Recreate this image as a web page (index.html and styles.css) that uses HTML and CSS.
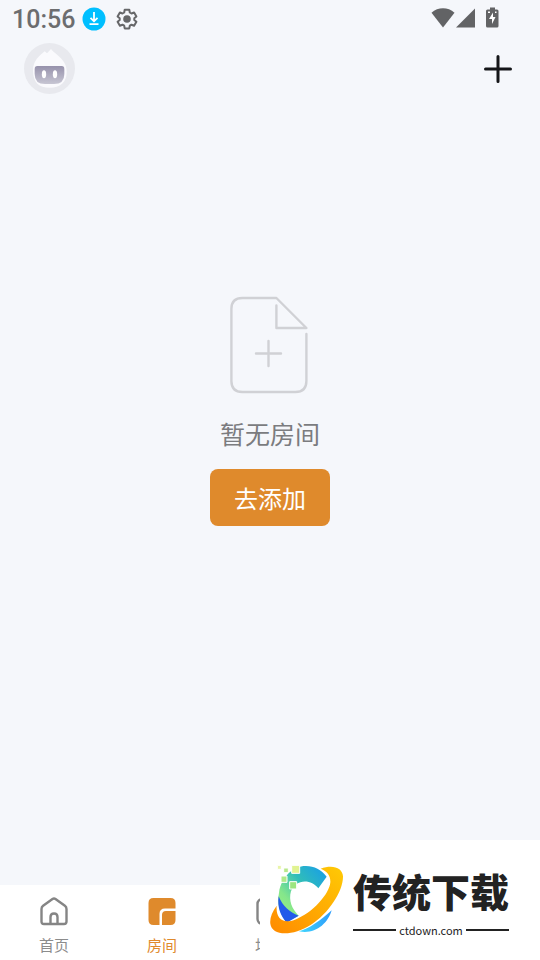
FILE: index.html
```html
<!DOCTYPE html>
<html lang="zh-CN">
<head>
<meta charset="utf-8">
<meta name="viewport" content="width=device-width, initial-scale=1">
<title>房间</title>
<link rel="stylesheet" href="styles.css">
</head>
<body>
<div class="app">
  <div class="status">
    <span class="clock">10:56</span>
    <svg class="status-download" width="24" height="24" viewBox="0 0 24 24">
      <circle cx="12" cy="12" r="11.5" fill="#00bfff"/>
      <path d="M12 5v9M8.5 10.8 12 14.3l3.5-3.5M7.5 17.2h9" fill="none" stroke="#fff" stroke-width="1.8"/>
    </svg>
    <svg class="status-gear" width="24" height="24" viewBox="0 0 24 24" fill="none" stroke="#666769" stroke-width="2" stroke-linejoin="round">
      <path d="M9.7 2.8h4.6l.5 2.7 1.7 1 2.6-1 2.3 4-2.1 1.7v1.8l2.1 1.7-2.3 4-2.6-1-1.7 1-.5 2.7H9.7l-.5-2.7-1.7-1-2.6 1-2.3-4L4.7 13v-1.8L2.6 9.5l2.3-4 2.6 1 1.7-1z"/>
      <circle cx="12" cy="12" r="3.8" fill="#666769" stroke="none"/>
    </svg>
    <div class="system">
      <svg width="24" height="20" viewBox="0 0 24 20"><path d="M0.5 4.7C7-1.2 17-1.2 23.5 4.7L12 19.5z" fill="#626365"/></svg>
      <svg width="20" height="20" viewBox="0 0 20 20"><path d="M1 19.5 20 .5v19z" fill="#626365"/></svg>
      <svg class="battery" width="14" height="22" viewBox="0 0 14 22">
        <path d="M4 2.5V.5h5v2h2q1.500 0 1.500 1.500v15q0 1.500-1.500 1.500h-9.500Q0 20.500 0 19V4q0-1.500 1.500-1.500z" fill="#626365"/>
        <path d="M7 5.500v4.500h2.500L6 17v-5H3zM2 4.500h2v1.500H2zM9 4.500h1.500v1.500H9z" fill="#fff"/>
      </svg>
    </div>
  </div>

  <header class="header">
    <button class="avatar" aria-label="个人中心">
      <svg width="51" height="51" viewBox="0 0 153 153">
        <defs><linearGradient id="visor" x1="0" y1="0" x2="0" y2="1"><stop offset="0" stop-color="#9792ac"/><stop offset="1" stop-color="#c7c6d3"/></linearGradient></defs>
        <circle cx="76.500" cy="76.500" r="76.500" fill="#e8e9ee"/>
        <path d="M27 83C27 53 46 38 62 25l7 6 12-13c8 11 20 17 29 27 11 12 18 23 18 42 0 31-19 47-51 47S27 118 27 83z" fill="#fafafd"/>
        <path d="M40 69h73q8 0 8 9v15q0 30-31 30H63Q32 123 32 93V78q0-9 8-9z" fill="url(#visor)"/>
        <ellipse cx="60" cy="94" rx="6.500" ry="12" fill="#fff"/><ellipse cx="93" cy="94" rx="6.500" ry="12" fill="#fff"/>
      </svg>
    </button>
    <button class="add" aria-label="添加">
      <svg width="28" height="28" viewBox="0 0 28 28"><path d="M14 1.500v25M1.500 14h25" stroke="#141518" stroke-width="3" stroke-linecap="round"/></svg>
    </button>
  </header>

  <main class="empty">
    <svg width="80" height="98" viewBox="1 0 80 98" fill="none" stroke="#d0d1d5" stroke-width="2.400" stroke-linecap="round" stroke-linejoin="round">
      <path d="M77 38v47q0 11-11 11H13Q2 96 2 85V13Q2 2 13 2h34l30 30H47V9.500" transform="translate(.4 0)"/>
      <path d="M39.500 45v25M27 57.500h25"/>
    </svg>
    <p class="empty-text">暂无房间</p>
    <button class="primary">去添加</button>
  </main>

  <nav class="tabs">
    <a class="tab" href="#home">
      <svg width="28" height="30" viewBox="0 0 28 30" fill="none" stroke="#858585" stroke-width="2.400" stroke-linejoin="round">
        <path d="M1.500 13q0-2 1.600-3.200L12.500 3q1.500-1 3 0l9.400 6.800q1.600 1.200 1.600 3.200v12.500q0 2.500-2.500 2.500H4q-2.500 0-2.500-2.500z"/>
        <path d="M10.500 28v-7q0-3.500 3.500-3.500t3.500 3.500v7"/>
      </svg>
      <span>首页</span>
    </a>
    <a class="tab active" href="#rooms" aria-current="page">
      <svg width="28" height="30" viewBox="0 0 28 30">
        <path d="M5.500 2h17q5 0 5 5v5.500H17q-5.500 0-5.500 5.500v11h-6q-5 0-5-5V7q0-5 5-5zM14 29V19q0-4 4-4h9.500v9q0 5-5 5z" fill="#df8a2c"/>
      </svg>
      <span>房间</span>
    </a>
    <a class="tab" href="#scenes">
      <svg width="28" height="30" viewBox="0 0 28 30"><rect x="1.500" y="3" width="25" height="25" rx="5" fill="none" stroke="#858585" stroke-width="2.400"/></svg>
      <span>场景</span>
    </a>
  </nav>

  <aside class="brand">
    <svg width="74" height="70" viewBox="45 91 222 210">
      <defs>
        <linearGradient id="ring" x1="0" y1="1" x2="1" y2="0"><stop offset="0" stop-color="#ff8a00"/><stop offset="1" stop-color="#ffca05"/></linearGradient>
        <linearGradient id="cyan" x1="0" y1="1" x2="1" y2="0"><stop offset="0" stop-color="#a0f57c"/><stop offset=".3" stop-color="#85e68b"/><stop offset=".6" stop-color="#30bdb9"/><stop offset="1" stop-color="#169bec"/></linearGradient>
        <linearGradient id="sky" x1="0" y1="0" x2="1" y2="0"><stop offset="0" stop-color="#42d8ff"/><stop offset="1" stop-color="#2c9bfa"/></linearGradient>
      </defs>
      <path d="M72 174C79 123 119 93 153 94c25 0 46 11 62 32l-25 35c-22-31-71-27-82 9-8 27 3 54 23 73l-36 19c-20-22-30-54-23-88z" fill="url(#cyan)"/>
      <path d="M71 185c12 29 32 48 60 58l-36 21C77 245 66 216 71 185z" fill="#235bea"/>
      <path d="M132 290c31-8 64-32 98-63-12 42-51 73-98 63z" fill="url(#sky)"/>
      <path d="M197 102c37-14 66-2 67 23 1 44-43 112-96 145-57 36-117 34-122-3-2-17 5-35 19-54-3 37 17 56 55 42 52-19 104-78 106-112 1-20-9-33-29-41z" fill="url(#ring)"/>
      <g stroke="#fff" stroke-width="3">
        <path d="M110 92h24v24h-24z" fill="#e1f391"/><path d="M67 92h12v12H67z" fill="#e9f5a9"/><path d="M86 100h14v14H86z" fill="#b9e88b"/><path d="M78 124h18v19H78z" fill="#afe989"/><path d="M104 141h21v22h-21z" fill="#9de580"/>
      </g>
    </svg>
    <div class="brand-words">
      <strong>传统下载</strong>
      <span class="domain">ctdown.com</span>
    </div>
  </aside>
</div>
</body>
</html>
```
FILE: styles.css
```css
* {
  box-sizing: border-box;
}

body {
  margin: 0;
  background: #f5f7fb;
  font-family: "Noto Sans CJK SC", sans-serif;
}

button {
  padding: 0;
  border: 0;
  background: none;
  font: inherit;
  cursor: pointer;
}

svg {
  display: block;
  flex: none;
}

.app {
  position: relative;
  display: flex;
  flex-direction: column;
  min-height: 100vh;
}

.status {
  display: flex;
  align-items: center;
  height: 37px;
  padding: 0 40px 0 12px;
  color: #6c6d6f;
}

.clock {
  margin-right: 7px;
  padding-top: 2px;
  font-family: Roboto, sans-serif;
  font-size: 25px;
  font-weight: 500;
  line-height: 36px;
}

.status-gear {
  margin-left: 9px;
}

.system {
  display: flex;
  align-items: center;
  margin-left: auto;
  padding-bottom: 2px;
}

.battery {
  margin-left: 11px;
}

.header {
  display: flex;
  align-items: center;
  justify-content: space-between;
  padding: 6px 28px 0 24px;
}

.empty {
  flex: 1;
  display: flex;
  flex-direction: column;
  align-items: center;
  padding-top: 202px;
}

.empty-text {
  margin: 20px 0 16px;
  color: #7b7c7f;
  font-size: 25px;
  line-height: 39px;
}

.primary {
  padding: 0 24px;
  border-radius: 8px;
  background: #df8a2c;
  color: #fff;
  font-size: 24px;
  line-height: 57px;
}

.tabs {
  display: grid;
  grid-template-columns: repeat(5, 1fr);
  height: 75px;
  background: #fff;
}

.tab {
  display: flex;
  flex-direction: column;
  align-items: center;
  gap: 8px;
  padding-top: 11px;
  color: #8c8c8c;
  font-size: 15px;
  line-height: 22px;
  text-decoration: none;
}

.active {
  color: #df8a2c;
}

.brand {
  position: absolute;
  right: 0;
  bottom: 0;
  display: flex;
  align-items: center;
  gap: 9px;
  width: 280px;
  height: 120px;
  padding-left: 10px;
  background: #fff;
  color: #222;
}

.brand-words {
  display: flex;
  flex-direction: column;
  gap: 8px;
  padding-top: 4px;
}

.brand-words strong {
  font-size: 39px;
  font-weight: 900;
  line-height: 48px;
}

.domain {
  display: flex;
  align-items: center;
  gap: 3px;
  font-size: 11px;
  line-height: 16px;
}

.domain::before,
.domain::after {
  content: "";
  flex: 1;
  height: 2px;
  background: #222;
}
```
